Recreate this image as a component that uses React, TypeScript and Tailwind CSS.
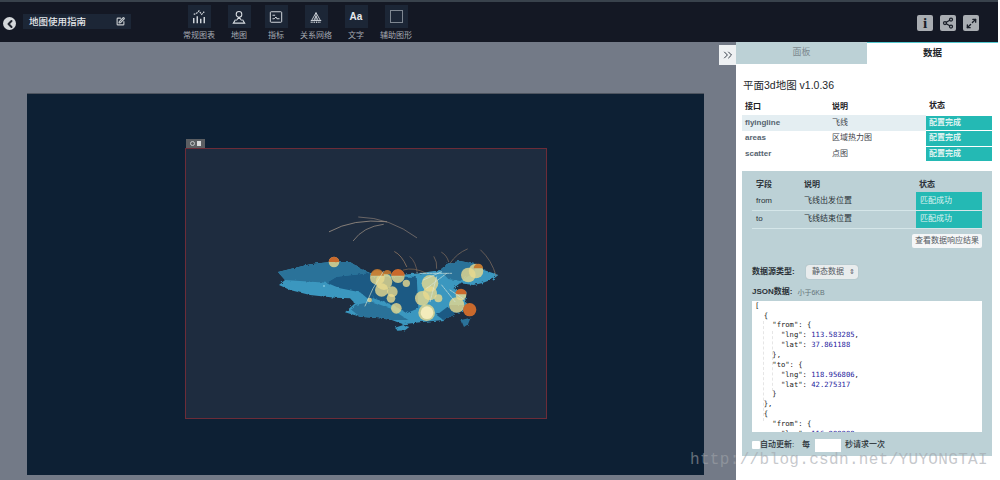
import { ChevronLeft, ChevronsRight, Maximize2, Share2, SquarePen } from "lucide-react";
import type { ReactNode } from "react";

const cn = '"Liberation Sans", "Noto Sans CJK SC", sans-serif';

function ToolIcon({ label, children }: { label: string; children: ReactNode }) {
  return (
    <div className="flex w-[32px] flex-col items-center">
      <div className="flex h-[23px] w-[23px] items-center justify-center bg-[#1c2636] text-[#d8dde2]">{children}</div>
      <span className="mt-[2px] text-[8px] leading-[11px] whitespace-nowrap text-[#a4aab2]">{label}</span>
    </div>
  );
}

// top half of a bubble shows the orange layer under it
function halfTop(x: number, y: number, r: number) {
  return `M${x - r} ${y} A${r} ${r} 0 0 1 ${x + r} ${y} Z`;
}

function MapArt() {
  const bubbles: [number, number, number][] = [
    [222, 171, 16],
    [352, 218, 22],
    [414, 214, 20],
    [372, 230, 25],
    [365, 255, 20],
    [397, 260, 16],
    [393, 280, 13],
    [439, 235, 11],
    [409, 310, 16],
    [329, 285, 7],
    [510, 235, 25],
    [487, 280, 22],
    [510, 265, 21],
    [535, 280, 12],
    [500, 323, 25],
    [590, 300, 23],
    [603, 270, 16],
    [625, 210, 22],
    [648, 198, 22],
  ];
  return (
    <svg viewBox="0 0 720 405" className="h-[135px] w-[240px]">
      <defs>
        <filter id="rough" x="-5%" y="-5%" width="110%" height="110%">
          <feTurbulence type="fractalNoise" baseFrequency="0.09" numOctaves="2" seed="4" />
          <feDisplacementMap in="SourceGraphic" scale="10" />
        </filter>
      </defs>
      <g filter="url(#rough)">
        <path
          d="M54 201 L100 190 L150 178 L210 171 L270 171 L309 195 L330 204 L420 210 L480 205 L540 195 L565 175 L600 168 L650 178 L672 195 L715 210 L700 222 L665 235 L640 240 L600 235 L580 250 L620 260 L615 290 L640 310 L600 320 L570 335 L550 345 L480 352 L430 358 L395 345 L360 340 L300 335 L255 322 L285 295 L270 280 L225 278 L150 270 L90 255 L57 240 L75 225 Z"
          fill="#3a97bf"
        />
        <path d="M54 201 L100 190 L150 178 L210 171 L270 171 L309 195 L330 204 L230 215 L200 233 L120 228 L75 225 Z" fill="#2a7299" />
        <path d="M200 233 L230 215 L330 204 L345 250 L335 290 L300 262 L240 250 Z" fill="#1d5a84" />
        <path d="M285 300 L335 290 L390 310 L445 345 L395 345 L360 340 L300 335 L275 315 Z" fill="#2a7299" />
        <path d="M335 215 L470 215 L475 310 L440 325 L400 300 L340 280 Z" fill="#1d5a84" />
        <path d="M540 195 L565 175 L600 168 L650 178 L640 205 L600 228 L565 222 Z" fill="#2a7299" />
        <path d="M530 330 L570 300 L615 300 L600 320 L570 335 L550 345 Z" fill="#1d5a84" />
        <path d="M405 368 L430 360 L448 366 L435 376 L412 377 Z" fill="#3a97bf" />
        <path d="M603 345 L632 338 L624 358 L612 366 Z" fill="#2a7299" />
      </g>
      <circle cx="192" cy="243" r="3" fill="#7fc4dc" />
      {bubbles.map(([x, y, r], i) => (
        <circle key={i} cx={x} cy={y} r={r} fill="#e8d98f" opacity="0.8" />
      ))}
      <path d={halfTop(222, 171, 16)} fill="#c9692c" />
      <path d={halfTop(352, 212, 20)} fill="#c4792f" opacity="0.9" />
      <path d={halfTop(414, 212, 20)} fill="#c9692c" />
      <path d={halfTop(382, 208, 13)} fill="#c4792f" opacity="0.9" />
      <path d={halfTop(603, 268, 17)} fill="#c9692c" />
      <path d={halfTop(655, 190, 14)} fill="#c4792f" />
      <circle cx="629" cy="314" r="20" fill="#c9692c" />
      <circle cx="501" cy="323" r="19" fill="#f3ecbb" />
      <g fill="none" strokeLinecap="round">
        <path d="M208 80 Q280 40 380 50" stroke="#b9a796" strokeWidth="2" />
        <path d="M296 36 Q390 38 470 98" stroke="#8f8278" strokeWidth="2" />
        <path d="M280 107 Q310 65 370 58" stroke="#a8988a" strokeWidth="2" />
        <path d="M404 140 Q425 150 440 185" stroke="#a8866a" strokeWidth="2" />
        <path d="M450 155 Q468 170 472 205" stroke="#806a5c" strokeWidth="2" />
        <path d="M522 155 Q532 170 530 190" stroke="#8a7464" strokeWidth="2" />
        <path d="M545 142 Q560 150 566 170" stroke="#8a7464" strokeWidth="2" />
        <path d="M622 132 Q590 145 570 175" stroke="#8a7464" strokeWidth="2" />
        <path d="M662 135 Q695 165 708 212" stroke="#8a7464" strokeWidth="2" />
        <path d="M430 195 Q460 185 500 205" stroke="#8a6a4c" strokeWidth="2" />
        <path d="M370 200 Q335 250 315 303" stroke="#d5e4cf" strokeWidth="2" />
        <path d="M480 205 L575 205 M490 225 L545 200 M500 250 L560 205 M510 290 L530 215 M545 240 L585 290 M570 255 L615 285" stroke="#d5e6dc" strokeWidth="2" strokeDasharray="7 3" />
      </g>
    </svg>
  );
}

export default function App() {
  return (
    <div className="relative flex h-[480px] w-[1000px] overflow-hidden bg-white text-black" style={{ fontFamily: cn }}>
      <div className="flex w-[998px] shrink-0 flex-col">
        <header className="flex h-[42px] shrink-0 items-start border-t-2 border-[#39424c] bg-[#141824] pt-[3px]">
          <div className="mt-[12px] ml-[3px] flex h-[13px] w-[13px] items-center justify-center rounded-full bg-[#d5d8db]">
            <ChevronLeft size={12} strokeWidth={4} className="text-[#20242e]" />
          </div>
          <div className="mt-[9px] ml-[7px] flex h-[15px] w-[108px] items-center justify-between bg-[#1c2636] pr-[6px] pl-[6px]">
            <span className="text-[9.5px] leading-none font-medium text-[#e4e7ea]">地图使用指南</span>
            <SquarePen size={9} strokeWidth={3} className="text-[#c6cace]" />
          </div>
          <nav className="ml-[52px] flex">
            <ToolIcon label="常规图表">
              <svg viewBox="0 0 16 16" className="h-[14px] w-[14px]" fill="none" stroke="currentColor" strokeWidth="1.3">
                <path d="M2 15V9M6 15V7M10 15v-5M14 15V8" strokeWidth="1.6" />
                <path d="M2 5l3-1 3-3 3 4 3-3" strokeDasharray="2 1" />
              </svg>
            </ToolIcon>
            <div className="w-[8px]" />
            <ToolIcon label="地图">
              <svg viewBox="0 0 16 16" className="h-[14px] w-[14px]" fill="none" stroke="currentColor" strokeWidth="1.2">
                <circle cx="8" cy="5" r="3.2" />
                <path d="M8 8.2 5 12M8 8.2 11 12M4 11 1.5 15h13L12 11" />
              </svg>
            </ToolIcon>
            <div className="w-[5px]" />
            <ToolIcon label="指标">
              <svg viewBox="0 0 16 16" className="h-[14px] w-[14px]" fill="none" stroke="currentColor" strokeWidth="1.1">
                <rect x="1.5" y="2" width="13" height="12" rx="1" />
                <path d="M4 6h3M4 10h2l2-2 1 2h3" />
              </svg>
            </ToolIcon>
            <div className="w-[8px]" />
            <ToolIcon label="关系网络">
              <svg viewBox="0 0 16 16" className="h-[14px] w-[14px]" fill="none" stroke="currentColor" strokeWidth="1">
                <path d="M8 3 3 12M8 3l5 9M8 3v9M5.5 12 8 7l2.5 5M2 12h12" />
                <path d="M2 14h12" strokeDasharray="1 1" strokeWidth="1.6" />
              </svg>
            </ToolIcon>
            <div className="w-[8px]" />
            <ToolIcon label="文字">
              <span className="text-[10px] leading-none font-bold text-[#e6e9ec]">Aa</span>
            </ToolIcon>
            <div className="w-[8px]" />
            <ToolIcon label="辅助图形">
              <div className="h-[13px] w-[13px] border border-[#7f8791]" />
            </ToolIcon>
          </nav>
          <div className="mt-[10px] mr-[19px] ml-auto flex gap-[7px]">
            <div className="flex h-[16px] w-[16px] items-center justify-center rounded-[2px] bg-[#a9adb2] text-[15px] leading-none font-bold text-[#1a1f29]" style={{ fontFamily: '"Liberation Serif", serif' }}>
              i
            </div>
            <div className="flex h-[16px] w-[16px] items-center justify-center rounded-[2px] bg-[#a9adb2] text-[#1a1f29]">
              <Share2 size={12} strokeWidth={2.5} />
            </div>
            <div className="flex h-[16px] w-[16px] items-center justify-center rounded-[2px] bg-[#a9adb2] text-[#1a1f29]">
              <Maximize2 size={11} strokeWidth={3} />
            </div>
          </div>
        </header>

        <div className="flex min-h-0 flex-1">
          <main className="w-[736px] shrink-0 bg-[#737a87] pt-[51px] pl-[27px]">
            <div className="relative h-[382px] w-[677px] border-t border-[#4e5560] bg-[#0d2034]">
              <div className="absolute top-[45px] left-[159px] flex h-[9px] w-[19px] items-center justify-center gap-[2px] bg-[#5b5e62]">
                <span className="h-[5px] w-[5px] rounded-full border border-[#c5c7c9]" />
                <span className="h-[5px] w-[4px] bg-[#d8d9da]" />
              </div>
              <div className="absolute top-[54px] left-[158px] h-[271px] w-[362px] border border-[#6c2c38] bg-[#1e2c3f]">
                <div className="absolute top-[56px] left-[74px]">
                  <MapArt />
                </div>
              </div>
            </div>
          </main>

          <aside className="relative flex-1 bg-white">
            <div className="absolute top-[3px] -left-[17px] flex h-[20px] w-[17px] items-center justify-center bg-[#eef1f3] text-[#27303c]">
              <ChevronsRight size={14} strokeWidth={1.6} />
            </div>
            <div className="flex h-[22px]">
              <div className="flex w-[131px] items-center justify-center bg-[#bcd1d6] text-[9px] text-[#7d8a90]">面板</div>
              <div className="flex flex-1 items-center justify-center border-t border-[#54c8cf] text-[9.5px] font-bold text-[#22262b]">数据</div>
            </div>
            <h2 className="mt-[13px] ml-[7px] text-[10.5px] leading-[16px] text-[#24282c]">平面3d地图 v1.0.36</h2>

            <table className="mt-[5px] ml-[6px] w-[250px] table-fixed border-collapse text-[8px] leading-none text-[#3f454c]">
              <thead>
                <tr className="h-[17px] text-left font-bold text-[#1c2024]">
                  <th className="w-[90px] pl-[3px]">接口</th>
                  <th className="w-[94px]">说明</th>
                  <th className="pl-[3px]">状态</th>
                </tr>
              </thead>
              <tbody>
                {[
                  ["flyingline", "飞线"],
                  ["areas", "区域热力图"],
                  ["scatter", "点图"],
                ].map(([a, b], i) => (
                  <tr key={a} className={`h-[15.6px] ${i === 0 ? "bg-[#e4eef2]" : ""}`}>
                    <td className="pl-[3px] font-bold text-[#55636f]">{a}</td>
                    <td>{b}</td>
                    <td className="border-y border-white bg-[#24b9b4] pl-[3px] font-bold text-[#dff3f1]">配置完成</td>
                  </tr>
                ))}
              </tbody>
            </table>

            <section className="mt-[9px] ml-[6px] h-[285px] w-[250px] bg-[#bcd1d6] px-[10px] pt-[6px] text-[#2b3138]">
              <table className="w-[230px] table-fixed border-collapse text-[8px] leading-none">
                <thead>
                  <tr className="h-[15px] text-left font-bold">
                    <th className="w-[52px] pl-[4px]">字段</th>
                    <th className="w-[112px]">说明</th>
                    <th className="pl-[3px]">状态</th>
                  </tr>
                </thead>
                <tbody>
                  {[
                    ["from", "飞线出发位置"],
                    ["to", "飞线结束位置"],
                  ].map(([a, b]) => (
                    <tr key={a} className="h-[18px] border-b border-[#d5e6e9]">
                      <td className="pl-[4px]">{a}</td>
                      <td>{b}</td>
                      <td className="bg-[#24b9b4] pl-[4px] text-[#dff3f1]">匹配成功</td>
                    </tr>
                  ))}
                </tbody>
              </table>
              <div className="mt-[5px] flex justify-end">
                <button className="h-[14px] w-[70px] rounded-[2px] bg-[#f4f6f7] text-[8px] leading-none whitespace-nowrap text-[#555b62]">查看数据响应结果</button>
              </div>
              <div className="mt-[17px] flex h-[14px] items-center">
                <span className="w-[54px] text-[8px] font-bold">数据源类型:</span>
                <div className="flex h-[14px] w-[52px] items-center justify-between rounded-[3px] bg-[#e8eced] pr-[3px] pl-[6px] text-[8px] text-[#555b62] shadow-[0_0_1px_#8a979b]">
                  静态数据 <span className="text-[7px] leading-none">⇕</span>
                </div>
              </div>
              <div className="mt-[9px] flex h-[9px] items-center">
                <span className="text-[8px] leading-none font-bold">JSON数据:</span>
                <span className="ml-[5px] text-[7px] leading-none text-[#66757b]">小于6KB</span>
              </div>
              <div className="relative mt-[4px] h-[131px] w-[230px] overflow-hidden bg-white">
                <span className="absolute top-[20px] left-[11px] h-[100px] border-l border-dashed border-[#e6e6e6]" />
                <span className="absolute top-[30px] left-[20px] h-[60px] border-l border-dashed border-[#e6e6e6]" />
                <pre className="relative pl-[3px] text-[7.2px] leading-[9.85px] text-[#222]" style={{ fontFamily: '"DejaVu Sans Mono", monospace' }}>
                  {"[\n  {\n    \"from\": {\n      \"lng\": "}
                  <span className="text-[#1d1a9c]">113.583285</span>
                  {",\n      \"lat\": "}
                  <span className="text-[#1d1a9c]">37.861188</span>
                  {"\n    },\n    \"to\": {\n      \"lng\": "}
                  <span className="text-[#1d1a9c]">118.956806</span>
                  {",\n      \"lat\": "}
                  <span className="text-[#1d1a9c]">42.275317</span>
                  {"\n    }\n  },\n  {\n    \"from\": {\n      \"lng\": "}
                  <span className="text-[#1d1a9c]">116.000000</span>
                </pre>
              </div>
              <div className="mt-[7px] flex h-[13px] items-center text-[8px] font-medium">
                <span className="h-[8px] w-[8px] rounded-[1px] bg-white" />
                <span className="w-[35px] whitespace-nowrap">自动更新:</span>
                <span className="ml-[7px]">每</span>
                <span className="ml-[5px] h-[13px] w-[26px] bg-white" />
                <span className="ml-[4px]">秒请求一次</span>
              </div>
            </section>
          </aside>
        </div>
      </div>

      <div className="pointer-events-none absolute top-[449px] left-[690px] text-[16px] leading-[22px] tracking-[0.33px] whitespace-nowrap text-[#a0a4aa]/60" style={{ fontFamily: '"Liberation Mono", monospace' }}>
        http://blog.csdn.net/YUYONGTAI
      </div>
    </div>
  );
}
